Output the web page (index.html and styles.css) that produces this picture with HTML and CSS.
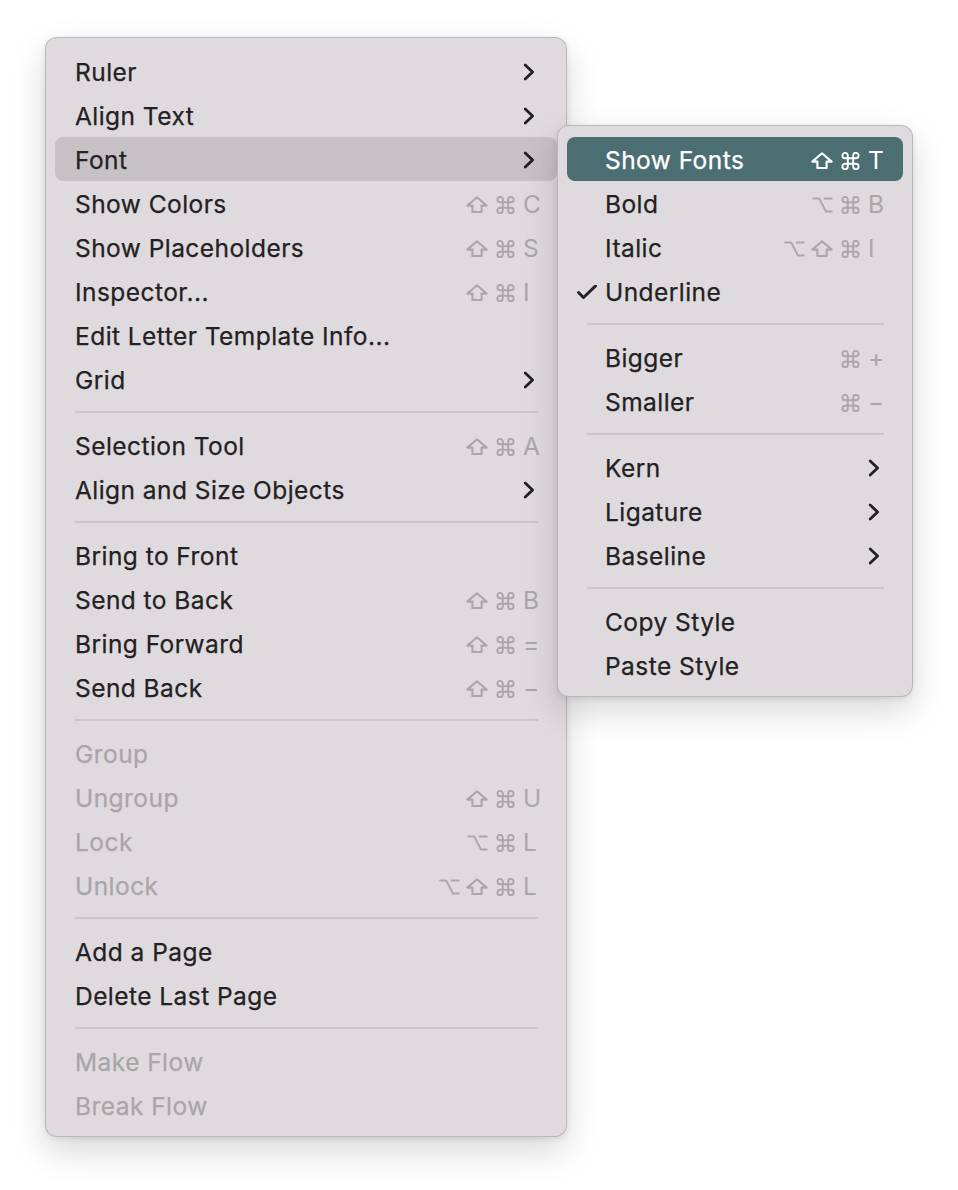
FILE: index.html
```html
<!DOCTYPE html>
<html>
<head>
<meta charset="utf-8">
<link rel="stylesheet" href="styles.css">
</head>
<body>
<svg class="defs" width="0" height="0" aria-hidden="true">
  <defs>
    <symbol id="i-shift" viewBox="0 0 22 17"><path d="M11 1.3 L20.7 9.6 H15.6 V16 H6.4 V9.6 H1.3 Z" /></symbol>
    <symbol id="i-cmd" viewBox="0 0 20 20"><path d="M7 7 V4 A3 3 0 1 0 4 7 H16 A3 3 0 1 0 13 4 V16 A3 3 0 1 0 16 13 H4 A3 3 0 1 0 7 16 Z" /></symbol>
    <symbol id="i-opt" viewBox="0 0 22 17"><path d="M1.2 1.5 H7.4 L14.8 15.5 H20.8 M13.4 1.5 H20.8" /></symbol>
    <symbol id="i-chev" viewBox="0 0 12 18"><path d="M2.2 2 L9.6 9 L2.2 16" /></symbol>
  </defs>
</svg>
<div class="stage">
  <div class="menu main">
    <div class="item"><span class="label">Ruler</span><span class="chev"><svg width="12" height="18"><use href="#i-chev"/></svg></span></div>
    <div class="item"><span class="label">Align Text</span><span class="chev"><svg width="12" height="18"><use href="#i-chev"/></svg></span></div>
    <div class="item open"><span class="label">Font</span><span class="chev"><svg width="12" height="18"><use href="#i-chev"/></svg></span></div>
    <div class="item"><span class="label">Show Colors</span><span class="sc"><span class="mod"><svg class="shift"><use href="#i-shift"/></svg></span><span class="mod"><svg class="cmd"><use href="#i-cmd"/></svg></span><span class="key">C</span></span></div>
    <div class="item"><span class="label">Show Placeholders</span><span class="sc"><span class="mod"><svg class="shift"><use href="#i-shift"/></svg></span><span class="mod"><svg class="cmd"><use href="#i-cmd"/></svg></span><span class="key">S</span></span></div>
    <div class="item"><span class="label">Inspector...</span><span class="sc"><span class="mod"><svg class="shift"><use href="#i-shift"/></svg></span><span class="mod"><svg class="cmd"><use href="#i-cmd"/></svg></span><span class="key">I</span></span></div>
    <div class="item"><span class="label">Edit Letter Template Info...</span></div>
    <div class="item"><span class="label">Grid</span><span class="chev"><svg width="12" height="18"><use href="#i-chev"/></svg></span></div>
    <div class="sep"></div>
    <div class="item"><span class="label">Selection Tool</span><span class="sc"><span class="mod"><svg class="shift"><use href="#i-shift"/></svg></span><span class="mod"><svg class="cmd"><use href="#i-cmd"/></svg></span><span class="key">A</span></span></div>
    <div class="item"><span class="label">Align and Size Objects</span><span class="chev"><svg width="12" height="18"><use href="#i-chev"/></svg></span></div>
    <div class="sep"></div>
    <div class="item"><span class="label">Bring to Front</span></div>
    <div class="item"><span class="label">Send to Back</span><span class="sc"><span class="mod"><svg class="shift"><use href="#i-shift"/></svg></span><span class="mod"><svg class="cmd"><use href="#i-cmd"/></svg></span><span class="key">B</span></span></div>
    <div class="item"><span class="label">Bring Forward</span><span class="sc"><span class="mod"><svg class="shift"><use href="#i-shift"/></svg></span><span class="mod"><svg class="cmd"><use href="#i-cmd"/></svg></span><span class="key">=</span></span></div>
    <div class="item"><span class="label">Send Back</span><span class="sc"><span class="mod"><svg class="shift"><use href="#i-shift"/></svg></span><span class="mod"><svg class="cmd"><use href="#i-cmd"/></svg></span><span class="key">−</span></span></div>
    <div class="sep"></div>
    <div class="item disabled"><span class="label">Group</span></div>
    <div class="item disabled"><span class="label">Ungroup</span><span class="sc"><span class="mod"><svg class="shift"><use href="#i-shift"/></svg></span><span class="mod"><svg class="cmd"><use href="#i-cmd"/></svg></span><span class="key">U</span></span></div>
    <div class="item disabled"><span class="label">Lock</span><span class="sc"><span class="mod"><svg class="opt"><use href="#i-opt"/></svg></span><span class="mod"><svg class="cmd"><use href="#i-cmd"/></svg></span><span class="key">L</span></span></div>
    <div class="item disabled"><span class="label">Unlock</span><span class="sc"><span class="mod"><svg class="opt"><use href="#i-opt"/></svg></span><span class="mod"><svg class="shift"><use href="#i-shift"/></svg></span><span class="mod"><svg class="cmd"><use href="#i-cmd"/></svg></span><span class="key">L</span></span></div>
    <div class="sep"></div>
    <div class="item"><span class="label">Add a Page</span></div>
    <div class="item"><span class="label">Delete Last Page</span></div>
    <div class="sep"></div>
    <div class="item disabled"><span class="label">Make Flow</span></div>
    <div class="item disabled"><span class="label">Break Flow</span></div>
  </div>

  <div class="menu sub">
    <div class="item active"><span class="check"></span><span class="label">Show Fonts</span><span class="sc"><span class="mod"><svg class="shift"><use href="#i-shift"/></svg></span><span class="mod"><svg class="cmd"><use href="#i-cmd"/></svg></span><span class="key">T</span></span></div>
    <div class="item"><span class="check"></span><span class="label">Bold</span><span class="sc"><span class="mod"><svg class="opt"><use href="#i-opt"/></svg></span><span class="mod"><svg class="cmd"><use href="#i-cmd"/></svg></span><span class="key">B</span></span></div>
    <div class="item"><span class="check"></span><span class="label">Italic</span><span class="sc"><span class="mod"><svg class="opt"><use href="#i-opt"/></svg></span><span class="mod"><svg class="shift"><use href="#i-shift"/></svg></span><span class="mod"><svg class="cmd"><use href="#i-cmd"/></svg></span><span class="key">I</span></span></div>
    <div class="item"><span class="check"><svg viewBox="0 0 20 14" width="20" height="14"><path d="M1.5 7.5 L6.5 12.5 L18.5 1" /></svg></span><span class="label">Underline</span></div>
    <div class="sep"></div>
    <div class="item"><span class="check"></span><span class="label">Bigger</span><span class="sc"><span class="mod"><svg class="cmd"><use href="#i-cmd"/></svg></span><span class="key">+</span></span></div>
    <div class="item"><span class="check"></span><span class="label">Smaller</span><span class="sc"><span class="mod"><svg class="cmd"><use href="#i-cmd"/></svg></span><span class="key">−</span></span></div>
    <div class="sep"></div>
    <div class="item"><span class="check"></span><span class="label">Kern</span><span class="chev"><svg width="12" height="18"><use href="#i-chev"/></svg></span></div>
    <div class="item"><span class="check"></span><span class="label">Ligature</span><span class="chev"><svg width="12" height="18"><use href="#i-chev"/></svg></span></div>
    <div class="item"><span class="check"></span><span class="label">Baseline</span><span class="chev"><svg width="12" height="18"><use href="#i-chev"/></svg></span></div>
    <div class="sep"></div>
    <div class="item"><span class="check"></span><span class="label">Copy Style</span></div>
    <div class="item"><span class="check"></span><span class="label">Paste Style</span></div>
  </div>
</div>
</body>
</html>
```

FILE: styles.css
```css
html, body {
  margin: 0;
  padding: 0;
  background: #ffffff;
}

body {
  font-family: Inter, "Noto Sans", "Liberation Sans", sans-serif;
  color: #232123;
}

.defs {
  display: block;
  width: 0;
  height: 0;
  overflow: hidden;
}

.stage {
  position: relative;
  width: 958px;
  height: 1190px;
  padding: 37px 0 0 45px;
  box-sizing: border-box;
}

.menu {
  background: #dfdadd;
  border-radius: 12px;
  box-sizing: border-box;
  padding: 11px 0;
  border: 1px solid rgba(0, 0, 0, 0.16);
  box-shadow: 0 14px 34px rgba(0, 0, 0, 0.16), 0 2px 6px rgba(0, 0, 0, 0.08);
}

.main {
  width: 522px;
  height: 1100px;
}

.sub {
  position: absolute;
  left: 557px;
  top: 125px;
  width: 356px;
  height: 572px;
}

.item {
  display: flex;
  align-items: center;
  height: 44px;
  margin: 0 9px;
  padding: 1px 17px 0 20px;
  box-sizing: border-box;
  border-radius: 8px;
  font-size: 24.5px;
  font-weight: 400;
  letter-spacing: 0.45px;
  -webkit-text-stroke: 0.25px currentColor;
  white-space: nowrap;
}

.sub .item {
  padding: 1px 18px 0 10px;
}

.label {
  flex: 1;
}

.item.open {
  background: #c6c1c5;
}

.item.active {
  background: #4b6e72;
  color: #ffffff;
}

.item.disabled {
  color: #a9a5a8;
}

.check {
  width: 28px;
  display: flex;
  align-items: center;
}

.check svg path {
  fill: none;
  stroke: #232123;
  stroke-width: 3;
  stroke-linecap: round;
  stroke-linejoin: round;
}

.chev {
  width: 17px;
  display: flex;
  align-items: center;
  color: #222022;
}

.chev svg {
  fill: none;
  stroke: currentColor;
  stroke-width: 2.8;
  stroke-linecap: round;
  stroke-linejoin: round;
}

.sc {
  display: flex;
  align-items: center;
  color: #aaa6a9;
}

.item.active .sc {
  color: #ffffff;
}

.mod {
  width: 28px;
  height: 42px;
  display: flex;
  align-items: center;
  justify-content: center;
}

.mod svg {
  fill: none;
  stroke: currentColor;
  stroke-width: 2.1;
  stroke-linecap: round;
  stroke-linejoin: round;
  transform: translateY(1px);
}

.mod svg.shift {
  width: 22px;
  height: 17px;
}

.mod svg.cmd {
  width: 19px;
  height: 18px;
}

.mod svg.opt {
  width: 21px;
  height: 16px;
}

.key {
  width: 17px;
  margin-left: 4px;
  letter-spacing: 0;
  -webkit-text-stroke: 0;
}

.sep {
  height: 22px;
  display: flex;
  align-items: center;
  margin: 0 28px 0 29px;
}

.sep::before {
  content: "";
  flex: 1;
  height: 2px;
  background: #cac5c9;
}
```
